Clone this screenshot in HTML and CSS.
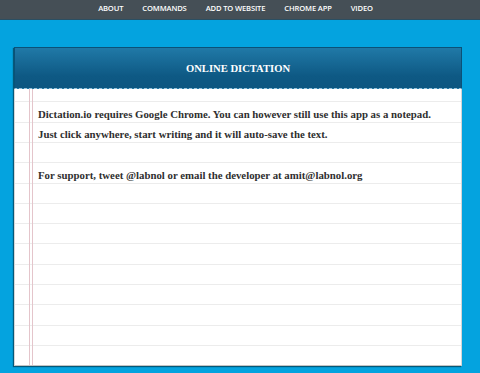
FILE: index.html
```html
<!DOCTYPE html>
<html lang="en">
<head>
    <meta charset="UTF-8">
    <meta name="viewport" content="width=device-width, initial-scale=1.0">
    <title>Online Dictation</title>
    <link rel="stylesheet" href="styles.css">
</head>
<body>
    <nav class="topnav">
        <a href="#">ABOUT</a>
        <a href="#">COMMANDS</a>
        <a href="#">ADD TO WEBSITE</a>
        <a href="#">CHROME APP</a>
        <a href="#">VIDEO</a>
    </nav>

    <main class="page">
        <section class="card">
            <header class="card-head">ONLINE DICTATION</header>
            <div class="paper">
                <div class="margin-line"></div>
                <div class="notes">
                    <p>Dictation.io requires Google Chrome. You can however still use this app as a notepad.</p>
                    <p>Just click anywhere, start writing and it will auto-save the text.</p>
                    <p>&nbsp;</p>
                    <p>For support, tweet @labnol or email the developer at amit@labnol.org</p>
                </div>
            </div>
        </section>
    </main>
</body>
</html>
```

FILE: styles.css
```css
html, body {
    margin: 0;
    height: 100%;
}

body {
    background-color: #04a3df;
    font-family: "Liberation Serif", serif;
    overflow: hidden;
}

.topnav {
    height: 20px;
    background-color: #454f56;
    border-bottom: 1px solid #2a4f63;
    display: flex;
    justify-content: center;
    align-items: center;
    gap: 19px;
    padding-right: 9px;
    padding-bottom: 3px;
    box-sizing: border-box;
}

.topnav a {
    color: #fff;
    text-decoration: none;
    font-family: "Open Sans", sans-serif;
    font-size: 7.6px;
    font-weight: 600;
    letter-spacing: -0.15px;
}

.page {
    padding: 27px 18px 0 14px;
}

.card {
    box-shadow: -1px 1px 1px rgba(0, 0, 0, 0.45);
}

.card-head {
    height: 40px;
    display: flex;
    align-items: center;
    justify-content: center;
    color: #fff;
    font-size: 10.6px;
    font-weight: bold;
    background: linear-gradient(#2079a7, #0e5984 70%, #0d5680);
    border: 1px solid #0b5177;
    border-bottom: 1px dashed #9cc3d9;
}

.paper {
    height: 276px;
    display: flex;
    background-color: #fff;
    border: 1px solid #d6d6d6;
    border-top: none;
    border-bottom-color: #c4c4c4;
    background-image: repeating-linear-gradient(
        to bottom,
        transparent 0,
        transparent 12.3px,
        #ececec 12.3px,
        #ececec 13.3px,
        transparent 13.3px,
        transparent 20.3px
    );
}

.margin-line {
    width: 2px;
    margin-left: 14px;
    border-left: 1px solid #e4c5cb;
    border-right: 1px solid #e4c5cb;
}

.notes {
    padding: 15px 0 0 5px;
    color: #2f2f2f;
    font-size: 10.8px;
    font-weight: bold;
}

.notes p {
    margin: 0;
    height: 20.3px;
    line-height: 20.3px;
    white-space: nowrap;
}
```
